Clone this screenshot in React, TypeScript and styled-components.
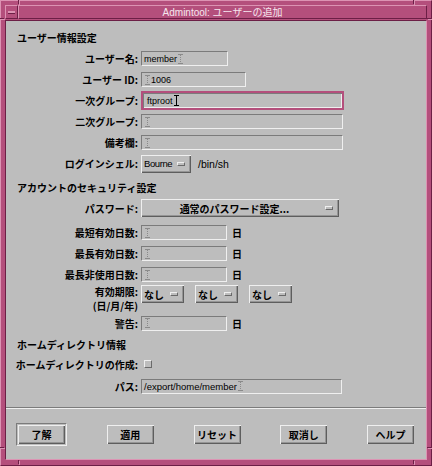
import React from 'react';
import styled, { createGlobalStyle, css } from 'styled-components';

const PINK = '#b44f7c';
const PINK_LIGHT = '#dc93b3';
const PINK_DARK = '#6c1f46';
const GRAY = '#bdbdbd';
const SHADE = '#7b7b7b';
const LIGHT = '#efefef';
const JP = '"Noto Sans CJK JP", "Liberation Sans", sans-serif';
const LATIN = '"Liberation Sans", "Noto Sans CJK JP", sans-serif';

const GlobalStyle = createGlobalStyle`
  html, body {
    margin: 0;
    padding: 0;
    background: ${GRAY};
  }
  body {
    font-family: ${JP};
    color: #000;
  }
`;

const Window = styled.div`
  position: relative;
  width: 432px;
  height: 466px;
  box-sizing: border-box;
  background: ${PINK};
  border: 1px solid;
  border-color: ${PINK_LIGHT} ${PINK_DARK} ${PINK_DARK} ${PINK_LIGHT};
  padding: 4px 4px 5px 4px;
  display: flex;
  flex-direction: column;
  gap: 1px;
`;

const Notch = styled.span<{ $vertical?: boolean }>`
  position: absolute;
  background: ${PINK_DARK};
  box-shadow: 1px 1px 0 ${PINK_LIGHT};
  ${({ $vertical }) =>
    $vertical
      ? css`
          width: 1px;
          height: 4px;
        `
      : css`
          width: 4px;
          height: 1px;
        `}
`;

const TitleBar = styled.div`
  display: flex;
  height: 14px;
  flex-shrink: 0;
`;

const MenuButton = styled.div`
  width: 13px;
  box-sizing: border-box;
  border: 1px solid;
  border-color: ${PINK_LIGHT} ${PINK_DARK} ${PINK_DARK} ${PINK_LIGHT};
  display: flex;
  align-items: center;
  justify-content: center;
`;

const MenuBar = styled.span`
  width: 7px;
  height: 2px;
  background: ${PINK_LIGHT};
  box-shadow: 0 1px 0 ${PINK_DARK};
`;

const TitleText = styled.div`
  flex: 1;
  box-sizing: border-box;
  border: 1px solid;
  border-color: ${PINK_LIGHT} ${PINK_DARK} ${PINK_DARK} ${PINK_LIGHT};
  color: #f6e6ee;
  font-family: ${LATIN};
  font-size: 10px;
  line-height: 12px;
  text-align: center;
  white-space: nowrap;
`;

const TitleJp = styled.span`
  font-family: ${JP};
`;

const Content = styled.div`
  flex: 1;
  background: ${GRAY};
  border: 1px solid;
  border-color: ${PINK_DARK} ${PINK_LIGHT} ${PINK_LIGHT} ${PINK_DARK};
  display: flex;
  flex-direction: column;
`;

const Form = styled.div`
  display: flex;
  flex-direction: column;
  padding-top: 3px;
`;

const SectionTitle = styled.div<{ $h: number; $pt: number }>`
  height: ${({ $h }) => $h}px;
  box-sizing: border-box;
  padding: ${({ $pt }) => $pt}px 0 0 11px;
  font-size: 10px;
  font-weight: 700;
  line-height: 12px;
  white-space: nowrap;
`;

const Row = styled.div<{ $h: number; $mt?: number }>`
  display: flex;
  align-items: center;
  height: ${({ $h }) => $h}px;
  margin-top: ${({ $mt }) => $mt || 0}px;
`;

const Label = styled.div`
  width: 132px;
  margin-right: 3px;
  flex-shrink: 0;
  text-align: right;
  font-size: 10px;
  font-weight: 700;
  line-height: 13px;
  white-space: nowrap;
`;

const LabelLine = styled.div`
  height: 14px;
  line-height: 14px;
`;

const Field = styled.div<{ $w: number; $focus?: boolean }>`
  box-sizing: border-box;
  width: ${({ $w }) => $w}px;
  height: 15px;
  display: flex;
  align-items: center;
  padding-left: 2px;
  font-family: ${LATIN};
  font-size: 9px;
  border: 1px solid;
  border-color: ${SHADE} ${LIGHT} ${LIGHT} ${SHADE};
  ${({ $focus }) =>
    $focus &&
    css`
      height: 19px;
      padding-left: 4px;
      border: 2px solid ${PINK};
      box-shadow: inset 1px 1px ${SHADE}, inset -1px -1px ${LIGHT};
    `}
`;

const Caret = styled.span<{ $active?: boolean }>`
  position: relative;
  display: inline-block;
  box-sizing: border-box;
  width: 5px;
  height: ${({ $active }) => ($active ? 11 : 10)}px;
  margin: 0 1px;
  border-top: 1px solid;
  border-bottom: 1px solid;
  border-color: ${({ $active }) => ($active ? '#000' : '#8a8a8a')};
  &::before {
    content: '';
    position: absolute;
    left: 2px;
    top: 0;
    bottom: 0;
    width: 1px;
    background: ${({ $active }) =>
      $active ? '#000' : 'repeating-linear-gradient(#8a8a8a 0 1px, transparent 1px 2px)'};
  }
`;

const Unit = styled.span`
  margin-left: 5px;
  font-size: 10px;
  font-weight: 700;
`;

const OptionButton = styled.div<{ $w: number }>`
  box-sizing: border-box;
  width: ${({ $w }) => $w}px;
  height: 18px;
  display: flex;
  align-items: center;
  padding: 0 6px 0 3px;
  box-shadow: inset 1px 1px ${LIGHT}, inset -1px -1px #5e5e5e, inset -2px -2px #959595;
  font-size: 10px;
  font-weight: 700;
  white-space: nowrap;
`;

const OptionText = styled.span<{ $center?: boolean; $latin?: boolean }>`
  flex: 1;
  text-align: ${({ $center }) => ($center ? 'center' : 'left')};
  ${({ $latin }) =>
    $latin &&
    css`
      font-family: ${LATIN};
      font-weight: 400;
      font-size: 9.5px;
      letter-spacing: -0.4px;
    `}
`;

const Indicator = styled.span`
  width: 8px;
  height: 4px;
  flex-shrink: 0;
  box-sizing: border-box;
  border: 1px solid;
  border-color: ${LIGHT} #6a6a6a #6a6a6a ${LIGHT};
`;

const ShellPath = styled.span`
  margin-left: 7px;
  font-family: ${LATIN};
  font-size: 10.5px;
`;

const DateGroup = styled.div`
  display: flex;
  gap: 11px;
  align-self: flex-start;
`;

const CheckBox = styled.span`
  width: 8px;
  height: 8px;
  margin-left: 3px;
  box-sizing: border-box;
  border: 1px solid;
  border-color: ${LIGHT} #6a6a6a #6a6a6a ${LIGHT};
`;

const PathText = styled.span`
  font-size: 9.5px;
`;

const Separator = styled.div`
  margin-top: 11px;
  height: 0;
  border-top: 1px solid ${SHADE};
  border-bottom: 1px solid ${LIGHT};
`;

const ButtonBar = styled.div`
  flex: 1;
  display: flex;
  align-items: center;
  justify-content: space-between;
  padding: 0 12px 0 10px;
`;

const DefaultRing = styled.div`
  box-sizing: border-box;
  width: 51px;
  height: 23px;
  border: 1px solid;
  border-color: ${SHADE} ${LIGHT} ${LIGHT} ${SHADE};
  display: flex;
  align-items: center;
  justify-content: center;
`;

const PushButton = styled.button`
  width: 47px;
  height: 19px;
  padding: 0;
  border: none;
  background: ${GRAY};
  color: #000;
  font-family: ${JP};
  font-size: 10px;
  font-weight: 700;
  box-shadow: inset 1px 1px ${LIGHT}, inset -1px -1px #5e5e5e, inset -2px -2px #959595;
`;

const notches: { x: number; y: number; v?: boolean }[] = [
  { x: 17, y: -1, v: true },
  { x: 412, y: -1, v: true },
  { x: 17, y: 459, v: true },
  { x: 412, y: 459, v: true },
  { x: -1, y: 17 },
  { x: 426, y: 17 },
  { x: -1, y: 446 },
  { x: 426, y: 446 },
];

const dayRows = ['最短有効日数:', '最長有効日数:', '最長非使用日数:'];

const App: React.FC = () => {
  return (
    <>
      <GlobalStyle />
      <Window>
        {notches.map((n, i) => (
          <Notch key={i} $vertical={n.v} style={{ left: n.x, top: n.y }} />
        ))}
        <TitleBar>
          <MenuButton>
            <MenuBar />
          </MenuButton>
          <TitleText>
            Admintool: <TitleJp>ユーザーの追加</TitleJp>
          </TitleText>
        </TitleBar>
        <Content>
          <Form>
            <SectionTitle $h={24} $pt={8}>
              ユーザー情報設定
            </SectionTitle>
            <Row $h={21}>
              <Label>ユーザー名:</Label>
              <Field $w={87}>
                member
                <Caret />
              </Field>
            </Row>
            <Row $h={21}>
              <Label>ユーザー ID:</Label>
              <Field $w={105}>
                <Caret />
                1006
              </Field>
            </Row>
            <Row $h={21}>
              <Label>一次グループ:</Label>
              <Field $w={203} $focus>
                ftproot
                <Caret $active />
              </Field>
            </Row>
            <Row $h={21}>
              <Label>二次グループ:</Label>
              <Field $w={202}>
                <Caret />
              </Field>
            </Row>
            <Row $h={21}>
              <Label>備考欄:</Label>
              <Field $w={202}>
                <Caret />
              </Field>
            </Row>
            <Row $h={21}>
              <Label>ログインシェル:</Label>
              <OptionButton $w={50}>
                <OptionText $latin>Bourne</OptionText>
                <Indicator />
              </OptionButton>
              <ShellPath>/bin/sh</ShellPath>
            </Row>

            <SectionTitle $h={24} $pt={8}>
              アカウントのセキュリティ設定
            </SectionTitle>
            <Row $h={20}>
              <Label>パスワード:</Label>
              <OptionButton $w={198}>
                <OptionText $center>通常のパスワード設定...</OptionText>
                <Indicator />
              </OptionButton>
            </Row>
            {dayRows.map((label, i) => (
              <Row key={label} $h={21} $mt={i === 0 ? 4 : 0}>
                <Label>{label}</Label>
                <Field $w={86}>
                  <Caret />
                </Field>
                <Unit>日</Unit>
              </Row>
            ))}
            <Row $h={28}>
              <Label>
                <LabelLine>有効期限:</LabelLine>
                <LabelLine>(日/月/年)</LabelLine>
              </Label>
              <DateGroup>
                {[0, 1, 2].map((i) => (
                  <OptionButton key={i} $w={43}>
                    <OptionText>なし</OptionText>
                    <Indicator />
                  </OptionButton>
                ))}
              </DateGroup>
            </Row>
            <Row $h={20}>
              <Label>警告:</Label>
              <Field $w={86}>
                <Caret />
              </Field>
              <Unit>日</Unit>
            </Row>

            <SectionTitle $h={22} $pt={6}>
              ホームディレクトリ情報
            </SectionTitle>
            <Row $h={18}>
              <Label>ホームディレクトリの作成:</Label>
              <CheckBox />
            </Row>
            <Row $h={20} $mt={3}>
              <Label>パス:</Label>
              <Field $w={201}>
                <PathText>/export/home/member</PathText>
                <Caret />
              </Field>
            </Row>
          </Form>
          <Separator />
          <ButtonBar>
            <DefaultRing>
              <PushButton>了解</PushButton>
            </DefaultRing>
            <PushButton>適用</PushButton>
            <PushButton>リセット</PushButton>
            <PushButton>取消し</PushButton>
            <PushButton>ヘルプ</PushButton>
          </ButtonBar>
        </Content>
      </Window>
    </>
  );
};

export default App;
